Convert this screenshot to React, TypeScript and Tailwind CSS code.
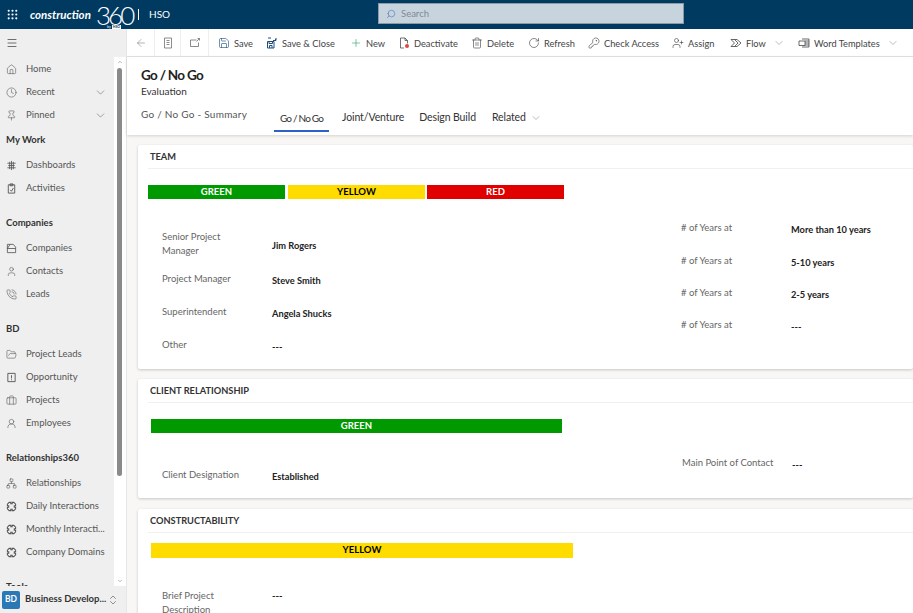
import React from "react";
import {
  ArrowLeft,
  Briefcase,
  ChevronDown,
  ChevronUp,
  ChevronsUpDown,
  Clock,
  FolderOpen,
  Grip,
  Home,
  KeyRound,
  Menu,
  Network,
  PhoneCall,
  Pin,
  Plus,
  RotateCw,
  Save,
  Search,
  Trash2,
  User,
  UserPlus,
  UserRound,
} from "lucide-react";

type IconProps = { className?: string; strokeWidth?: number };
type Icon = React.ComponentType<IconProps>;

const font = { fontFamily: 'Lato, "Open Sans", sans-serif' };

function Glyph({ className, strokeWidth = 1.25, children }: IconProps & { children: React.ReactNode }) {
  return (
    <svg viewBox="0 0 24 24" fill="none" stroke="currentColor" strokeWidth={strokeWidth} className={className}>
      {children}
    </svg>
  );
}

const Interaction: Icon = ({ className }) => (
  <Glyph className={className} strokeWidth={2.2}>
    <path d="M7 3h3.5v3h3V3H17l4 4v3.5h-3v3h3V17l-4 4h-3.5v-3h-3v3H7l-4-4v-3.5h3v-3H3V7z" />
  </Glyph>
);
const DashboardGlyph: Icon = ({ className }) => (
  <Glyph className={className} strokeWidth={1.8}>
    <path d="M12 2v20M3 7h18M5 12h14M3 17h18M8 4v16M16 4v16" />
  </Glyph>
);
const ActivityGlyph: Icon = ({ className }) => (
  <Glyph className={className} strokeWidth={2}>
    <path d="M5 4h14v18H5zM9 2h6v4H9zM9 15l3 3 4-7" />
  </Glyph>
);
const CompanyGlyph: Icon = ({ className }) => (
  <Glyph className={className} strokeWidth={1.8}>
    <path d="M3 3h13l5 6v12H3zM3 12l6-9M3 12h18" />
  </Glyph>
);
const OpportunityGlyph: Icon = ({ className }) => (
  <Glyph className={className} strokeWidth={2}>
    <path d="M4 3h16v18H4zM12 7v7M12 16v2" />
  </Glyph>
);
const FormGlyph: Icon = ({ className }) => (
  <Glyph className={className} strokeWidth={1.5}>
    <path d="M5 2h14v20H5zM9 7h6M9 11h6M9 15h6" />
  </Glyph>
);
const PopoutGlyph: Icon = ({ className }) => (
  <Glyph className={className} strokeWidth={1.5}>
    <path d="M15 6H3v13h16v-8M15 9l6-6M17 3h4v4" />
  </Glyph>
);
const SaveCloseGlyph: Icon = ({ className }) => (
  <Glyph className={className} strokeWidth={2}>
    <path d="M3 9h13v13H3zM6 9v4h7V9M7 22v-5h5v5M10 2H4M20 2v5h-6M17 7l3-3" />
  </Glyph>
);
const DeactivateGlyph: Icon = ({ className }) => (
  <svg viewBox="0 0 24 24" fill="none" stroke="currentColor" strokeWidth={1.5} className={className}>
    <path d="M12 22H5V2h9l5 5v6M14 2v5h5" />
    <circle cx="18" cy="18" r="4" fill="#d8483c" stroke="none" />
  </svg>
);
const FlowGlyph: Icon = ({ className }) => (
  <Glyph className={className} strokeWidth={1.6}>
    <path d="M2 5h12l8 7-8 7H2l7-7zM9 5l7 7-7 7" />
  </Glyph>
);
const TemplateGlyph: Icon = ({ className }) => (
  <Glyph className={className} strokeWidth={1.6}>
    <path d="M8 4h14v16H8M2 8h12v9H2zM14 8h8M14 12h8M14 16h8" />
  </Glyph>
);

type NavEntry = { label: string; icon: Icon; chevron?: boolean };
type NavGroup = { title?: string; items: NavEntry[] };

const navGroups: NavGroup[] = [
  {
    items: [
      { label: "Home", icon: Home },
      { label: "Recent", icon: Clock, chevron: true },
      { label: "Pinned", icon: Pin, chevron: true },
    ],
  },
  {
    title: "My Work",
    items: [
      { label: "Dashboards", icon: DashboardGlyph },
      { label: "Activities", icon: ActivityGlyph },
    ],
  },
  {
    title: "Companies",
    items: [
      { label: "Companies", icon: CompanyGlyph },
      { label: "Contacts", icon: User },
      { label: "Leads", icon: PhoneCall },
    ],
  },
  {
    title: "BD",
    items: [
      { label: "Project Leads", icon: FolderOpen },
      { label: "Opportunity", icon: OpportunityGlyph },
      { label: "Projects", icon: Briefcase },
      { label: "Employees", icon: UserRound },
    ],
  },
  {
    title: "Relationships360",
    items: [
      { label: "Relationships", icon: Network },
      { label: "Daily Interactions", icon: Interaction },
      { label: "Monthly Interacti...", icon: Interaction },
      { label: "Company Domains", icon: Interaction },
    ],
  },
  { title: "Tools", items: [] },
];

const commands: { label: string; icon: Icon; color?: string; chevron?: boolean; width: string }[] = [
  { label: "Save", icon: Save, color: "text-[#1f4f80]", width: "w-[48px]" },
  { label: "Save & Close", icon: SaveCloseGlyph, color: "text-[#1f4f80]", width: "w-[84px]" },
  { label: "New", icon: Plus, color: "text-[#2ea36a]", width: "w-[48px]" },
  { label: "Deactivate", icon: DeactivateGlyph, width: "w-[73px]" },
  { label: "Delete", icon: Trash2, width: "w-[57px]" },
  { label: "Refresh", icon: RotateCw, width: "w-[60px]" },
  { label: "Check Access", icon: KeyRound, width: "w-[84px]" },
  { label: "Assign", icon: UserPlus, width: "w-[58px]" },
  { label: "Flow", icon: FlowGlyph, chevron: true, width: "w-[68px]" },
  { label: "Word Templates", icon: TemplateGlyph, chevron: true, width: "w-[100px]" },
];

function Nav() {
  return (
    <aside className="w-[127px] shrink-0 flex flex-col bg-[#efefef] border-r border-[#e6e6e6]">
      <div className="h-[28px] shrink-0 flex items-center pl-[6px]">
        <Menu className="size-[12px] text-[#444]" strokeWidth={1.5} />
      </div>
      <div className="flex-1 flex overflow-hidden">
        <div className="w-[115px] pt-[1px] overflow-hidden">
          {navGroups.map((group, i) => (
            <div key={i} className={group.title && i > 1 ? "mt-[10px]" : ""}>
              {group.title && (
                <div className="h-[26px] mb-[1px] pl-[6px] flex items-center text-[9.5px] font-bold text-[#333]">
                  {group.title}
                </div>
              )}
              {group.items.map((item) => (
                <div key={item.label} className="h-[23px] flex items-center pl-[6px] text-[9.5px] text-[#555]">
                  <item.icon className="size-[11px] text-[#555] shrink-0 mr-[9px]" strokeWidth={1.25} />
                  <span className="whitespace-nowrap">{item.label}</span>
                  {item.chevron && (
                    <ChevronDown className="size-[13px] text-[#777] ml-auto mr-[7px]" strokeWidth={1.25} />
                  )}
                </div>
              ))}
            </div>
          ))}
        </div>
        <div className="w-[12px] bg-white flex flex-col items-center">
          <ChevronUp className="size-[6px] mt-[2px] text-[#999]" strokeWidth={3} />
          <div className="w-[5px] h-[408px] mt-[3px] rounded-full bg-[#8a8a8a] mr-[1px]" />
          <ChevronDown className="size-[6px] mt-auto mb-[2px] text-[#999]" strokeWidth={3} />
        </div>
      </div>
      <div className="h-[27px] shrink-0 flex items-center pl-[2px] bg-[#efefef]">
        <div className="size-[18px] rounded-[2px] bg-[#2a78b5] text-white text-[8.5px] font-bold flex items-center justify-center">
          BD
        </div>
        <span className="w-[82px] ml-[5px] text-[9.5px] font-bold text-[#333] whitespace-nowrap">Business Develop...</span>
        <ChevronsUpDown className="size-[12px] text-[#555]" strokeWidth={1.25} />
      </div>
    </aside>
  );
}

function CommandBar() {
  return (
    <div className="h-[28px] shrink-0 flex items-center bg-white border-b border-[#e3e3e3] text-[9.25px] text-[#444]">
      <div className="w-[28px] h-full border-r border-[#eee] flex items-center justify-center">
        <ArrowLeft className="size-[12px] text-[#888]" strokeWidth={1.25} />
      </div>
      <div className="w-[26px] h-full border-r border-[#eee] flex items-center justify-center">
        <FormGlyph className="size-[12px] text-[#666]" />
      </div>
      <div className="w-[28px] h-full border-r border-[#eee] flex items-center justify-center">
        <PopoutGlyph className="size-[12px] text-[#666]" />
      </div>
      <div className="flex items-center pl-[9px]">
        {commands.map((c) => (
          <div key={c.label} className={"flex items-center shrink-0 " + c.width}>
            <c.icon className={"size-[12px] shrink-0 mr-[4px] " + (c.color ?? "text-[#444]")} strokeWidth={1.25} />
            <span className="whitespace-nowrap pt-[2px]">{c.label}</span>
            {c.chevron && <ChevronDown className="size-[12px] shrink-0 ml-[7px] text-[#777]" strokeWidth={1} />}
          </div>
        ))}
      </div>
    </div>
  );
}

function FormHeader() {
  return (
    <div className="h-[78px] shrink-0 bg-white pl-[14px] pt-[9px] shadow-[0_1px_3px_rgba(0,0,0,0.15)] relative">
      <div className="text-[13.5px] leading-[18px] font-bold text-[#222] tracking-[-0.7px]">Go / No Go</div>
      <div className="text-[10px] leading-[14px] text-[#333]">Evaluation</div>
      <div className="flex items-center h-[24px] mt-[8px] text-[#333]">
        <span className="w-[133px] mb-[8px] text-[10px] tracking-[0.25px] text-[#555] whitespace-nowrap">Go / No Go - Summary</span>
        <div className="w-[55px] h-[24px] mb-[-3px] flex items-center justify-center border-b-2 border-[#2f62c8] text-[10px] tracking-[-0.8px] mr-[13px]">
          Go / No Go
        </div>
        <span className="text-[10.5px] tracking-[-0.1px] mr-[15px] mb-[1px]">Joint/Venture</span>
        <span className="text-[10.5px] tracking-[-0.1px] mr-[16px] mb-[1px]">Design Build</span>
        <span className="text-[10.5px] tracking-[-0.1px] mb-[1px]">Related</span>
        <ChevronDown className="size-[12px] ml-[4px] text-[#777]" strokeWidth={1} />
      </div>
    </div>
  );
}

function Bar({ label, tone, className }: { label: string; tone: "green" | "yellow" | "red"; className: string }) {
  const tones = {
    green: "bg-[#009900] text-white",
    yellow: "bg-[#ffdc00] text-black",
    red: "bg-[#e00000] text-white",
  };
  return (
    <div className={"flex items-center justify-center text-[9.5px] font-bold " + tones[tone] + " " + className}>
      {label}
    </div>
  );
}

function Field({ label, value, className = "" }: { label: React.ReactNode; value: string; className?: string }) {
  return (
    <div className={"flex items-center " + className}>
      <div className="w-[110px] mb-[4px] text-[9.5px] leading-[14px] text-[#666]">{label}</div>
      <div className="text-[9.25px] font-bold text-[#222]">{value}</div>
    </div>
  );
}

function Card({ title, className, children }: { title: string; className: string; children: React.ReactNode }) {
  return (
    <section className={"bg-white rounded-[2px] shadow-[0_1px_3px_rgba(0,0,0,0.2)] shrink-0 " + className}>
      <div className="h-[24px] ml-[10px] pl-[2px] pt-[1px] flex items-center border-b border-[#f0f0f0] text-[9.25px] font-bold text-[#333]">
        {title}
      </div>
      {children}
    </section>
  );
}

export default function App() {
  return (
    <div className="w-[913px] h-[613px] overflow-hidden flex flex-col bg-white" style={font}>
      <header className="h-[29px] shrink-0 flex items-center bg-[#003a61] text-white relative">
        <Grip className="size-[13px] ml-[6px]" strokeWidth={2} />
        <span className="ml-[11px] text-[11.5px] font-bold italic w-[66px] whitespace-nowrap">construction</span>
        <span className="text-[26px] leading-[22px] font-light tracking-[-3px] w-[42px]">360</span>
        <div className="w-[1px] h-[11px] bg-white" />
        <span className="ml-[10px] text-[10px]">HSO</span>
        <div className="absolute left-[107px] top-[25px] flex items-center text-[3.5px] leading-[4px]">
          <span className="mr-[1px]">by</span>
          <span className="px-[1px] bg-white text-[#003a61] font-bold">HSO</span>
        </div>
        <div className="absolute left-[378px] top-[3px] w-[306px] h-[21px] flex items-center pl-[7px] bg-[#c8d4dd] border border-[#8c9aa6]">
          <Search className="size-[10px] text-[#4a78c0] -scale-x-100" strokeWidth={1.5} />
          <span className="ml-[5px] pt-[1px] text-[9.5px] text-[#7d8a96]">Search</span>
        </div>
      </header>
      <div className="flex-1 flex min-h-0">
        <Nav />
        <main className="flex-1 min-w-0 flex flex-col">
          <CommandBar />
          <FormHeader />
          <div className="flex-1 min-h-0 overflow-hidden bg-[#f8f7f6] pl-[11px] pt-[10px] flex flex-col gap-[10px]">
            <Card title="TEAM" className="h-[224px]">
              <div className="flex gap-[3px] ml-[10px] mt-[16px]">
                <Bar label="GREEN" tone="green" className="w-[137px] h-[14px]" />
                <Bar label="YELLOW" tone="yellow" className="w-[137px] h-[14px]" />
                <Bar label="RED" tone="red" className="w-[137px] h-[14px] -ml-[1px]" />
              </div>
              <div className="flex mt-[15px]">
                <div className="w-[519px] pl-[24px] pt-[15px]">
                  <Field label={<>Senior Project<br />Manager</>} value="Jim Rogers" className="h-[33px]" />
                  <Field label="Project Manager" value="Steve Smith" className="h-[33px] mt-[2.5px]" />
                  <Field label="Superintendent" value="Angela Shucks" className="h-[33px]" />
                  <Field label="Other" value="---" className="h-[32px]" />
                </div>
                <div className="pl-[24px] -mt-[1px]">
                  <Field label="# of Years at" value="More than 10 years" className="h-[33px]" />
                  <Field label="# of Years at" value="5-10 years" className="h-[33px]" />
                  <Field label="# of Years at" value="2-5 years" className="h-[32px]" />
                  <Field label="# of Years at" value="---" className="h-[32px]" />
                </div>
              </div>
            </Card>
            <Card title="CLIENT RELATIONSHIP" className="h-[119px]">
              <Bar label="GREEN" tone="green" className="w-[411px] h-[14px] ml-[13px] mt-[16px]" />
              <div className="flex mt-[19px]">
                <div className="w-[519px] pl-[24px] pt-[15px]">
                  <Field label="Client Designation" value="Established" className="h-[20px]" />
                </div>
                <div className="pl-[25px] pt-[3px]">
                  <Field label="Main Point of Contact" value="---" className="h-[20px]" />
                </div>
              </div>
            </Card>
            <Card title="CONSTRUCTABILITY" className="h-[120px] mt-[1px]">
              <Bar label="YELLOW" tone="yellow" className="w-[422px] h-[15px] ml-[13px] mt-[10px]" />
              <div className="pl-[24px] pt-[31px]">
                <div className="flex items-start">
                  <div className="w-[110px] text-[9.5px] leading-[14px] text-[#666]">
                    Brief Project<br />Description
                  </div>
                  <div className="text-[9.5px] leading-[14px] font-bold text-[#222]">---</div>
                </div>
              </div>
            </Card>
          </div>
        </main>
      </div>
    </div>
  );
}
